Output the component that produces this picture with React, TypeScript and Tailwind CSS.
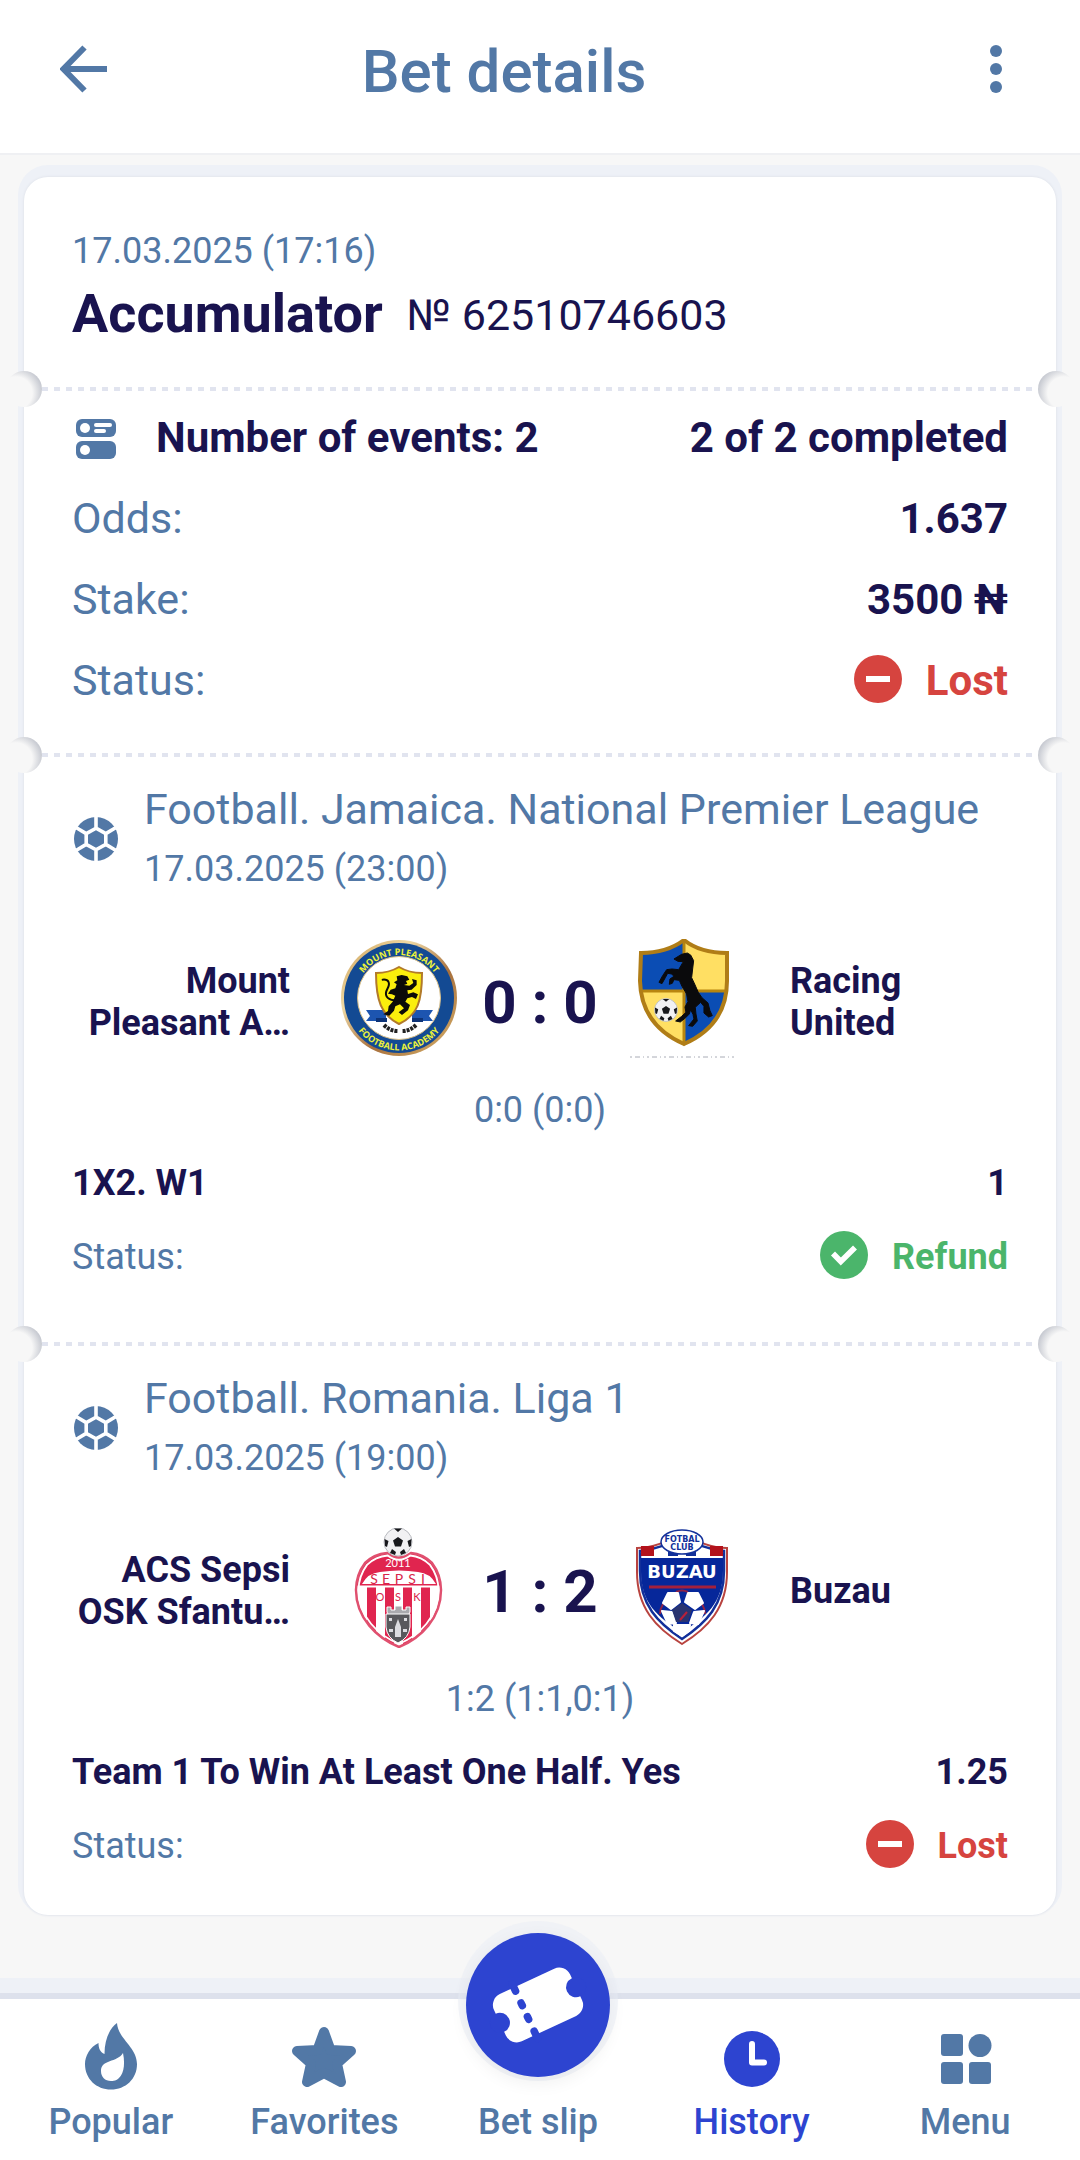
import type { ReactNode } from "react"

const lostColor = "text-[#d6443f]"
const refundColor = "text-[#4bb56b]"

/* ICONS */

function BackIcon() {
  return (
    <svg viewBox="0 0 48 48" className="w-12 h-12" fill="none" stroke="currentColor" strokeWidth="6">
      <path d="M24.5 2.5 3.5 24l21 21.5M3 24h44" />
    </svg>
  )
}

function DotsIcon() {
  return (
    <svg viewBox="0 0 48 48" className="w-12 h-12" fill="currentColor">
      <circle cx="24" cy="6" r="6" />
      <circle cx="24" cy="24" r="6" />
      <circle cx="24" cy="42" r="6" />
    </svg>
  )
}

function EventsIcon() {
  return (
    <svg viewBox="0 0 48 48" className="w-12 h-12" fill="#5278a6">
      <rect x="4" y="4" width="40" height="18" rx="6" />
      <rect x="4" y="26" width="40" height="18" rx="6" />
      <g fill="#fff">
        <circle cx="13" cy="13" r="5" />
        <circle cx="13" cy="35" r="5" />
        <rect x="22" y="8" width="18" height="4" rx="2" />
        <rect x="22" y="14" width="12" height="4" rx="2" />
      </g>
    </svg>
  )
}

function BallIcon() {
  return (
    <svg viewBox="0 0 48 48" className="w-12 h-12">
      <circle cx="24" cy="24" r="22" fill="#5278a6" />
      <path
        d="M24 13.2 33.8 18.6v10.8L24 34.8l-9.8-5.4V18.6zM24 13.2V1M24 34.8V47M33.8 18.6 44 12.5M33.8 29.4 44 35.5M14.2 18.6 4 12.5M14.2 29.4 4 35.5"
        fill="none"
        stroke="#fff"
        strokeWidth="3.6"
      />
    </svg>
  )
}

function LostIcon() {
  return (
    <svg viewBox="0 0 48 48" className="w-12 h-12 -mt-1">
      <circle cx="24" cy="24" r="24" fill="#d6443f" />
      <rect x="12" y="21" width="24" height="6" fill="#fff" />
    </svg>
  )
}

function RefundIcon() {
  return (
    <svg viewBox="0 0 48 48" className="w-12 h-12 -mt-1">
      <circle cx="24" cy="24" r="24" fill="#4bb56b" />
      <path d="M13 22.5 20.8 30.5 35 16.5" fill="none" stroke="#fff" strokeWidth="5.6" />
    </svg>
  )
}

function FireIcon() {
  return (
    <svg viewBox="0 0 72 72" className="w-18 h-18" fill="currentColor" fillRule="evenodd">
      <path d="M42 1C35 6 29.5 17 29.5 32 25 30 23.5 26 23.5 21 15 25 10 34 10 42 10 57 21.5 67.5 36 67.5S62 57 62 42C62 25 43 17 42 1ZM48 31C50 41 49 49 46 53.5 43 58 40 59 36 59 30 59 26 55 26 49 26 37 42 41 48 31Z" />
    </svg>
  )
}

function StarIcon() {
  return (
    <svg viewBox="0 0 72 72" className="w-18 h-18" fill="currentColor" stroke="currentColor" strokeWidth="10" strokeLinejoin="round">
      <path d="M36 10 42.5 28 63 29 49 41.5 53 60 36 51 19 60 23 41.5 9 29 29.5 28Z" />
    </svg>
  )
}

function HistoryIcon() {
  return (
    <svg viewBox="0 0 72 72" className="w-18 h-18">
      <circle cx="36" cy="37" r="28" fill="currentColor" />
      <path d="M36 22v18.5h12" fill="none" stroke="#fff" strokeWidth="6" strokeLinecap="round" strokeLinejoin="round" />
    </svg>
  )
}

function MenuIcon() {
  return (
    <svg viewBox="0 0 72 72" className="w-18 h-18" fill="currentColor">
      <rect x="12" y="12" width="22" height="22" rx="3" />
      <circle cx="51" cy="23.5" r="11.5" />
      <rect x="12" y="40" width="22" height="22" rx="3" />
      <rect x="40" y="40" width="22" height="22" rx="3" />
    </svg>
  )
}

function TicketIcon() {
  return (
    <svg viewBox="0 0 144 144" className="w-36 h-36">
      <g transform="rotate(-25 72 72)">
        <rect x="30" y="46" width="84" height="52" rx="12" fill="#fff" />
        <g fill="#2d44d0">
          <circle cx="30" cy="72" r="10" />
          <circle cx="114" cy="72" r="10" />
        </g>
        <path d="M57.5 42v8M57.5 63v3M57.5 78v3M57.5 94v8" stroke="#2d44d0" strokeWidth="7.5" strokeLinecap="round" />
      </g>
    </svg>
  )
}

/* TEAM LOGOS */

function FootballMark() {
  return (
    <g>
      <circle r="14" fill="#f1f1f3" stroke="#b9bbc0" />
      <path d="M0-5 5-1.5 3 4.5h-6l-2-6zM-4-13.5h8L0-10zM-13.5-3l4 2-1.5 6-2-1zM13.5-3l-4 2 1.5 6 2-1zM-8 11l2-4 4 3-1 3zM8 11 6 7l-4 3 1 3z" fill="#17181c" />
    </g>
  )
}

function MountPleasantLogo() {
  return (
    <svg viewBox="0 0 120 120" className="w-30 h-30" role="img" aria-label="Mount Pleasant">
      <defs>
        <path id="mpTop" d="M17 60a44 44 0 0 1 88 0" />
        <path id="mpBottom" d="M9.5 60a51.5 51.5 0 0 0 103 0" />
        <linearGradient id="mpGold" x1="0" y1="0" x2="1" y2="1">
          <stop offset="0" stopColor="#c99a4e" />
          <stop offset=".3" stopColor="#efd9a4" />
          <stop offset=".6" stopColor="#a8703d" />
          <stop offset="1" stopColor="#d9b56d" />
        </linearGradient>
      </defs>
      <circle cx="61" cy="59" r="58" fill="url(#mpGold)" />
      <circle cx="61" cy="59" r="55" fill="#134a93" />
      <circle cx="61" cy="59" r="41.5" fill="#fff" stroke="#d9bf87" />
      <g fill="#eef23a" fontFamily="Open Sans, sans-serif" fontWeight="700" fontSize="9">
        <text textAnchor="middle">
          <textPath href="#mpTop" startOffset="50%">MOUNT PLEASANT</textPath>
        </text>
        <text textAnchor="middle">
          <textPath href="#mpBottom" startOffset="50%">FOOTBALL ACADEMY</textPath>
        </text>
      </g>
      <path d="M28 71h20v11H28l4-5zM95 71H74v11h21l-4-5z" fill="#1d55b0" />
      <path d="M38 79h11v4H38zM74 79h11v4H74z" fill="#0d3377" />
      <path d="M38 34q13 0 23-6 10 6 23 6c0 28-4 42-23 51-18-9-23-24-23-51Z" fill="#fbee0c" stroke="#b27a2a" strokeWidth="2" />
      <g transform="translate(-18 -20) scale(.3333)">
        <path
          d="M245 168 262 172 268 182 258 186 262 194 252 198 268 200 280 192 276 180 290 184 290 198 275 212 262 214 264 225 280 220 294 226 288 240 276 234 262 238 256 248 270 258 264 274 246 288 236 280 252 268 240 256 226 262 222 275 208 290 190 286 204 276 206 262 218 248 226 230 216 226 204 224 212 212 226 208 230 196 222 190 232 184 230 172Z"
          fill="#0c0b08"
        />
        <path d="M222 244c-22-4-30-16-20-34s4-30-14-28" fill="none" stroke="#0c0b08" strokeWidth="6" strokeLinecap="round" />
      </g>
      <path d="M46 86q6 6 14 6M78 86q-6 6-14 6" fill="none" stroke="#222" strokeWidth="4" strokeDasharray="3 1" />
    </svg>
  )
}

function RacingUnitedLogo() {
  const shield = "M19 14q26 0 43-13 16 13 43 13v28q0 44-43 63Q19 86 18 42Z"
  return (
    <svg viewBox="0 0 120 120" className="w-30 h-30" role="img" aria-label="Racing United">
      <defs>
        <clipPath id="ruShield">
          <path d={shield} />
        </clipPath>
      </defs>
      <g clipPath="url(#ruShield)">
        <path d="M0 0h62v52H0zM62 52h60v60H62z" fill="#0b4db4" />
        <path d="M62 0h60v52H62zM0 52h62v60H0z" fill="#ffdf63" />
        <path d="M62 0v110M10 52h100" stroke="#b8860f" strokeWidth="3" />
      </g>
      <path d={shield} fill="none" stroke="#b07d17" strokeWidth="4" />
      <g transform="translate(44 71) scale(.82)">
        <FootballMark />
      </g>
      <path
        transform="translate(-302 -20) scale(.3333)"
        d="M1102 102 1085 106 1062 120 1074 127 1090 128 1076 152 1056 150 1040 152 1028 170 1017 190 1026 194 1036 176 1043 163 1055 165 1062 172 1050 180 1048 196 1057 193 1062 182 1078 184 1086 202 1100 225 1104 248 1095 264 1098 280 1085 292 1067 306 1081 309 1095 298 1108 285 1112 272 1119 286 1122 300 1106 320 1118 322 1132 306 1128 285 1126 265 1142 250 1152 262 1152 282 1166 294 1177 290 1170 275 1164 252 1146 236 1135 220 1124 195 1115 176 1118 150 1121 125 1112 108Z"
        fill="#0a0a0c"
        stroke="#0a0a0c"
        strokeWidth="3"
        strokeLinejoin="round"
      />
      <path d="M8 118h104" stroke="#a9acb6" strokeDasharray="2 3 5 3 1 3" />
    </svg>
  )
}

function SepsiLogo() {
  const shield = "M49 25q12 9 24 0 12 1 21 10 9 12 9 27c0 28-20 48-42 57C39 110 18 90 18 62q0-15 9-27 9-9 22-10Z"
  return (
    <svg viewBox="0 0 120 120" className="w-30 h-30" role="img" aria-label="ACS Sepsi OSK Sfantu">
      <defs>
        <clipPath id="sepsiShield">
          <path d={shield} />
        </clipPath>
      </defs>
      <g clipPath="url(#sepsiShield)">
        <path d="M0 0h120v120H0z" fill="#fff" />
        <path d="M0 20h120v39H0zM29 59h9v60h-9zM47 59h9v60h-9zM65 59h9v60h-9zM83 59h9v60h-9z" fill="#e0254f" />
        <path d="M24 56q6-11 18-12 19-3 38 0 12 1 18 12z" fill="#fff" />
        <path d="M17 58.5h90" stroke="#fff" strokeWidth="2" />
      </g>
      <path d={shield} fill="none" stroke="#e0506f" strokeWidth="2.5" />
      <path d={shield} fill="none" stroke="#fff" strokeWidth="2" transform="translate(60.5 66) scale(.94) translate(-60.5 -66)" />
      <g transform="translate(60 14)">
        <FootballMark />
      </g>
      <g textAnchor="middle" fontFamily="Lato, sans-serif" fontWeight="400" fill="#d8254b">
        <text x="60" y="39" fontSize="11" fill="#fff">2011</text>
        <text x="36" y="56" fontSize="14">S</text>
        <text x="48" y="56" fontSize="14">E</text>
        <text x="61" y="56" fontSize="14">P</text>
        <text x="74" y="56" fontSize="14">S</text>
        <text x="85" y="56" fontSize="14">I</text>
        <text x="42" y="73" fontSize="11">O</text>
        <text x="60" y="73" fontSize="11">S</text>
        <text x="79" y="73" fontSize="11">K</text>
      </g>
      <path d="M49 84v-5h4v3h4v-4h7v4h4v-3h4v5l-2 4H51z" fill="#a9a9ad" stroke="#fff" />
      <path d="M48 86h24v13q-1 11-12 16-11-5-12-16Z" fill="#58585c" stroke="#fff" />
      <path d="M60 91l3 8v10h-6v-10zM51 90h3v3h-3zM66 90h3v3h-3zM51 101h4v3h-4zM65 101h4v3h-4z" fill="#dcdce0" />
    </svg>
  )
}

function BuzauLogo() {
  return (
    <svg viewBox="0 0 120 120" className="w-30 h-30" role="img" aria-label="Buzau">
      <path d="M15 20q22 0 45-16 23 16 45 16v24c0 36-19 56-45 72C34 100 15 80 15 44Z" fill="#fff" stroke="#b8433f" strokeWidth="2" />
      <path d="M18 23q22-2 42-15 20 13 42 15v20c0 34-18 52-42 68C36 95 18 77 18 43Z" fill="#fff" stroke="#12309a" strokeWidth="2.500" />
      <path d="M19 18h13v10H19zM88 18h13v10H88z" fill="#b3121b" />
      <path d="M46 21h10v7H46zM64 21h10v7H64z" fill="#12309a" />
      <path d="M19 30h82v13c0 32-17 46-41 61C35 89 19 75 19 43Z" fill="#06279a" />
      <ellipse cx="60" cy="14" rx="21" ry="12" fill="#fff" stroke="#12309a" strokeWidth="1.500" />
      <g textAnchor="middle" fontFamily="DejaVu Sans, sans-serif" fontWeight="700">
        <text x="60" y="14" fontSize="8" fill="#12309a">FOTBAL</text>
        <text x="60" y="22" fontSize="8" fill="#12309a">CLUB</text>
        <text x="60" y="50" fontSize="18" fill="#fff">BUZAU</text>
      </g>
      <path d="M27 59h67" stroke="#a3203d" strokeWidth="3" />
      <path d="M41 76q-3 5-3 10M80 76q3 5 3 10M54 64q6-3 12 0" fill="none" stroke="#8c2148" strokeWidth="2" />
      <path
        d="M46 65l10 0 2 9-9 7-8-6zM66 65l10 0 5 10-8 6-10-7zM40 83l10 1 4 11-8 1zM82 83l-10 1-4 11 8 1zM52 97h16l-1 6-7 5-8-5z"
        fill="#fff"
        stroke="#fff"
        strokeWidth="2"
        strokeLinejoin="round"
      />
      <path d="M60 75l10 7-4 12H54l-4-12z" fill="#2a3470" />
      <path d="M58 92l7-8" stroke="#b8203a" strokeWidth="2" />
    </svg>
  )
}

/* TICKET PARTS */

function Divider() {
  return (
    <div className="relative h-9 flex items-center px-[18px]">
      <span className="absolute -left-[18px] w-9 h-9 rounded-full bg-[radial-gradient(27px_at_10px_22px,#f7f7f7_60%,#c4c7cf_100%)]"></span>
      <div className="h-1 flex-1 bg-[repeating-linear-gradient(90deg,#e1e4ef_0_6px,transparent_6px_12px)]"></div>
      <span className="absolute -right-[18px] w-9 h-9 rounded-full bg-[radial-gradient(27px_at_26px_22px,#f7f7f7_60%,#c4c7cf_100%)]"></span>
    </div>
  )
}

function Status({ value }: { value: "Lost" | "Refund" }) {
  return (
    <span className={`flex items-center gap-6 ${value === "Lost" ? lostColor : refundColor}`}>
      {value === "Lost" ? <LostIcon /> : <RefundIcon />}
      {value}
    </span>
  )
}

function Row({ label, children }: { label: string; children: ReactNode }) {
  return (
    <div className="flex justify-between items-center h-[81px]">
      <dt className="text-[43px] text-[#5278a6]">{label}</dt>
      <dd className="text-[42px] font-bold">{children}</dd>
    </div>
  )
}

type MatchProps = {
  league: string
  date: string
  home: string[]
  away: string[]
  homeLogo: ReactNode
  awayLogo: ReactNode
  score: string
  periods: string
  market: string
  odds: string
  status: "Lost" | "Refund"
}

function Match({ league, date, home, away, homeLogo, awayLogo, score, periods, market, odds, status }: MatchProps) {
  return (
    <section className="px-12 pt-2 pb-8">
      <div className="flex items-center gap-6">
        <div className="pb-1">
          <BallIcon />
        </div>
        <div>
          <h2 className="text-[43px] leading-[56px]">
            <span className="text-[#5278a6]">{league}</span>
          </h2>
          <p className="text-4xl leading-[64px] text-[#5278a6]">{date}</p>
        </div>
      </div>

      <div className="grid grid-cols-[1fr_120px_164px_120px_1fr] items-center mt-[38px] text-4xl leading-[42px] font-bold">
        <p className="text-right pr-12 pt-1.5">
          {home.map((line) => (
            <span key={line} className="block whitespace-nowrap">{line}</span>
          ))}
        </p>
        {homeLogo}
        <p className="text-center text-6xl leading-[72px] pt-2">{score}</p>
        {awayLogo}
        <p className="pl-12 pt-1.5">
          {away.map((line) => (
            <span key={line} className="block whitespace-nowrap">{line}</span>
          ))}
        </p>
      </div>

      <p className="text-center text-4xl leading-[48px] mt-[27px] text-[#5278a6]">{periods}</p>

      <div className="flex justify-between text-4xl leading-[72px] mt-[13px] font-bold">
        <p>{market}</p>
        <p>{odds}</p>
      </div>
      <div className="flex justify-between items-center text-4xl h-[75px]">
        <p className="text-[#5278a6]">Status:</p>
        <div className="font-bold">
          <Status value={status} />
        </div>
      </div>
    </section>
  )
}

function NavItem({ label, active, children }: { label: string; active?: boolean; children: ReactNode }) {
  return (
    <a
      href="#"
      className={`flex-1 flex flex-col items-center text-4xl leading-[48px] font-medium ${active ? "text-[#2d44d0]" : "text-[#5278a6]"}`}
    >
      {children}
      <span className="pt-1">{label}</span>
    </a>
  )
}

export default function App() {
  return (
    <div className="min-h-screen flex flex-col bg-[#f7f7f7] text-[#19134f] font-[Roboto,sans-serif]">
      <header className="flex items-center bg-white border-b-2 border-[#eff0f3] h-[155px] pb-4">
        <button aria-label="Back" className="pl-[60px] pr-[60px] text-[#5278a6]">
          <BackIcon />
        </button>
        <h1 className="flex-1 text-center text-6xl leading-[72px] font-medium pt-1.5">
          <span className="text-[#5278a6]">Bet details</span>
        </h1>
        <button aria-label="More" className="pl-[132px] pr-[60px] text-[#5278a6]">
          <DotsIcon />
        </button>
      </header>

      <main className="flex-1 px-6 pt-[22px] pb-[63px]">
        <article className="bg-white rounded-3xl shadow-[0_0_2px_1px_#e4e7ee,0_-6px_0_6px_#eef1f7]">
          <div className="px-12 pt-[50px] pb-5">
            <p className="text-4xl leading-[48px] text-[#5278a6]">17.03.2025 (17:16)</p>
            <div className="flex items-center gap-6 h-[76px]">
              <h2 className="text-[54px] font-bold">Accumulator</h2>
              <p className="text-[43px] pt-1">№ 62510746603</p>
            </div>
          </div>

          <Divider />

          <section className="px-12 pb-4">
            <div className="flex items-center h-16 text-[42px] leading-[56px] font-bold">
              <EventsIcon />
              <p className="flex-1 pl-9 pb-0.5">Number of events: 2</p>
              <p className="pb-0.5">2 of 2 completed</p>
            </div>
            <dl className="pt-[7px]">
              <Row label="Odds:">1.637</Row>
              <Row label="Stake:">3500 ₦</Row>
              <Row label="Status:">
                <Status value="Lost" />
              </Row>
            </dl>
          </section>

          <Divider />

          <Match
            league="Football. Jamaica. National Premier League"
            date="17.03.2025 (23:00)"
            home={["Mount", "Pleasant A…"]}
            away={["Racing", "United"]}
            homeLogo={<MountPleasantLogo />}
            awayLogo={<RacingUnitedLogo />}
            score="0 : 0"
            periods="0:0 (0:0)"
            market="1X2. W1"
            odds="1"
            status="Refund"
          />

          <Divider />

          <Match
            league="Football. Romania. Liga 1"
            date="17.03.2025 (19:00)"
            home={["ACS Sepsi", "OSK Sfantu…"]}
            away={["Buzau"]}
            homeLogo={<SepsiLogo />}
            awayLogo={<BuzauLogo />}
            score="1 : 2"
            periods="1:2 (1:1,0:1)"
            market="Team 1 To Win At Least One Half. Yes"
            odds="1.25"
            status="Lost"
          />
        </article>
      </main>

      <nav className="sticky bottom-0 flex pl-1 pr-2 pt-[23px] pb-[14px] bg-white border-t-6 border-[#dde1ec] shadow-[0_-15px_0_0_#eef1f7]">
        <NavItem label="Popular">
          <FireIcon />
        </NavItem>
        <NavItem label="Favorites">
          <StarIcon />
        </NavItem>
        <NavItem label="Bet slip">
          {/* round button sticks out over the bar */}
          <span className="-mt-[89px] mb-[17px] rounded-full bg-[#2d44d0] shadow-[0_6px_16px_2px_#0000000d,0_-4px_0_8px_#e9edf680]">
            <TicketIcon />
          </span>
        </NavItem>
        <NavItem label="History" active>
          <HistoryIcon />
        </NavItem>
        <NavItem label="Menu">
          <MenuIcon />
        </NavItem>
      </nav>
    </div>
  )
}
